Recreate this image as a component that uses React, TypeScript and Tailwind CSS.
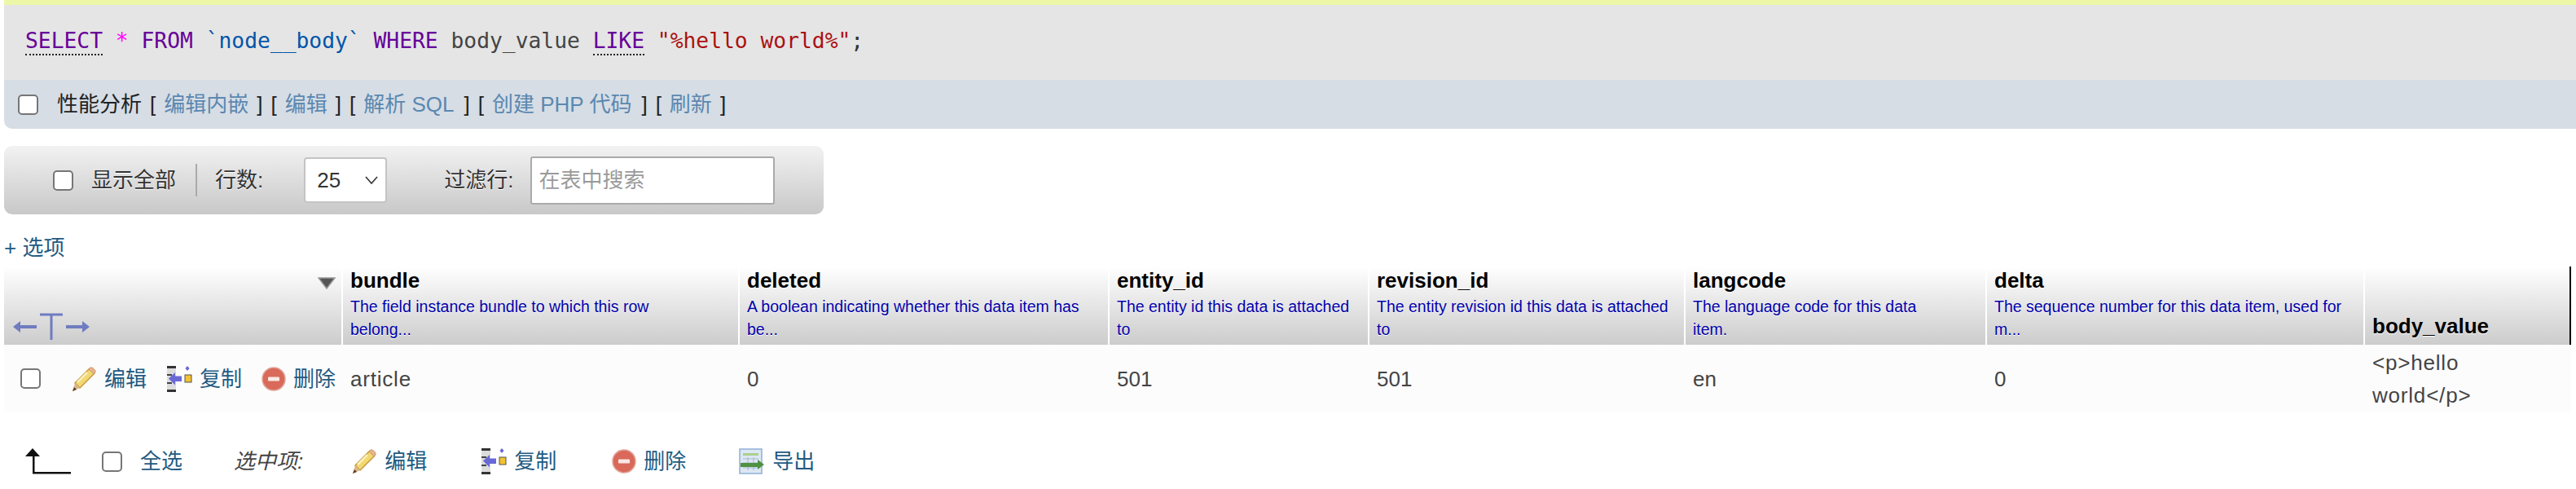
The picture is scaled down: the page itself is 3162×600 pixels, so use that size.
import React from "react";

const FONT = "font-['Liberation_Sans','Noto_Sans_CJK_SC',sans-serif]";
const LINK = "text-[#235a81]";

function Check() {
  return (
    <input
      type="checkbox"
      className="appearance-none block shrink-0 w-[25px] h-[25px] m-0 bg-white border-2 border-[#767676] rounded-[5px]"
    />
  );
}

function PencilIcon() {
  return (
    <svg width="32" height="32" viewBox="0 0 32 32" className="shrink-0">
      <path d="M23 3 L29 9 L11 27 L5 21 Z" fill="#f2d873" stroke="#c9983f" strokeWidth="1.5" />
      <path d="M22 4 L28 10 L30 8 C31 6 27 1 24 2 Z" fill="#e8b48c" stroke="#c99a6b" strokeWidth="1" />
      <path d="M5 21 L11 27 L2 31 Z" fill="#d9b98a" />
      <path d="M2 31 L4 26 L7 29 Z" fill="#5e3d1e" />
      <path d="M20 8 L8 20" stroke="#fbf0b8" strokeWidth="2.5" />
    </svg>
  );
}

function CopyIcon() {
  return (
    <svg width="32" height="32" viewBox="0 0 32 32" className="shrink-0">
      <rect x="1" y="0" width="11" height="32" fill="#dcdcdc" />
      <rect x="1" y="0" width="11" height="3" fill="#333" />
      <rect x="1" y="10" width="6" height="2" fill="#444" />
      <rect x="1" y="20" width="6" height="2" fill="#444" />
      <rect x="1" y="29" width="11" height="3" fill="#333" />
      <path d="M3 15.5 L11 8 V12.5 H19 V19 H11 V23.5 Z" fill="#6a68d6" />
      <rect x="23" y="11" width="8" height="9" fill="#f2c230" stroke="#555" strokeWidth="1" />
      <path d="M26 0 L28.5 3 L26 6 L23.5 3 Z" fill="#6a68d6" />
    </svg>
  );
}

function DeleteIcon() {
  return (
    <svg width="30" height="30" viewBox="0 0 30 30" className="shrink-0">
      <circle cx="15" cy="15" r="14" fill="#d9695a" stroke="#e0a498" strokeWidth="1.5" />
      <rect x="8" y="12.5" width="14" height="5" rx="1" fill="#f8e8e4" />
    </svg>
  );
}

function ExportIcon() {
  return (
    <svg width="32" height="32" viewBox="0 0 32 32" className="shrink-0">
      <rect x="1" y="1" width="27" height="30" fill="#dde7f3" stroke="#8fb0d8" strokeWidth="1.5" />
      <rect x="5" y="6" width="19" height="3" fill="#a9d08e" />
      <path d="M5 13 H24 M5 18 H24 M5 24 H24 M11 11 V27 M18 11 V27" stroke="#a8bcd2" strokeWidth="1.2" />
      <path d="M2 18 H23 V14 L31 20 L23 26 V23 H2 Z" fill="#4f9141" />
    </svg>
  );
}

function LinkedAction({ icon, label, className }: { icon: React.ReactNode; label: string; className: string }) {
  return (
    <span className={`flex items-center gap-[9px] ${className}`}>
      {icon}
      <span className={LINK}>{label}</span>
    </span>
  );
}

function HeaderCell({ name, lines }: { name: string; lines: string[] }) {
  return (
    <div className="h-full mr-[2px] pt-[2px] pl-[9px] bg-gradient-to-b from-white to-[#cccccc] [text-shadow:0_1px_0_#fff]">
      <div className="font-bold text-[26px] leading-[30px] text-black">{name}</div>
      <div className="mt-[3px] text-[19.5px] leading-[28px] text-[#0000aa] whitespace-nowrap">
        {lines.map((line) => (
          <div key={line}>{line}</div>
        ))}
      </div>
    </div>
  );
}

function BodyCell({ children }: { children: React.ReactNode }) {
  return <div className="pl-[9px] flex items-center text-[#444444]">{children}</div>;
}

function ProfileLink({ children }: { children: string }) {
  return <span className="text-[#5b88b0]">{children}</span>;
}

export default function App() {
  return (
    <div className={`w-[3162px] h-[600px] overflow-hidden bg-white text-[26px] ${FONT}`}>
      {/* query box */}
      <div className="ml-[5px] h-[6px] bg-[#ecf8a6]" />
      <div className="ml-[5px] h-[92px] bg-[#e5e5e5] flex items-center pl-[26px] pb-[2px] font-['DejaVu_Sans_Mono','Noto_Sans_CJK_SC',monospace] whitespace-pre text-[26.3px]">
        <span className="text-[#660099] border-b-2 border-dotted border-[#222] leading-[32px]">SELECT</span>
        <span className="text-[#ff00ff]"> * </span>
        <span className="text-[#660099]">FROM</span>
        <span className="text-[#0055aa]"> `node__body` </span>
        <span className="text-[#660099]">WHERE</span>
        <span className="text-[#444]"> body_value </span>
        <span className="text-[#660099] border-b-2 border-dotted border-[#222] leading-[32px]">LIKE</span>
        <span className="text-[#aa1111]"> "%hello world%"</span>
        <span className="text-[#333]">;</span>
      </div>
      <div className="ml-[5px] h-[60px] bg-[#d6dde5] rounded-bl-[10px] flex items-center gap-[10px] pl-[17px] whitespace-pre text-[#222]">
        <Check />
        <span className="ml-[13px]">性能分析</span>
        <span>[</span>
        <ProfileLink>编辑内嵌</ProfileLink>
        <span>]</span>
        <span>[</span>
        <ProfileLink>编辑</ProfileLink>
        <span>]</span>
        <span>[</span>
        <ProfileLink>解析 SQL</ProfileLink>
        <span className="ml-[2px]">]</span>
        <span>[</span>
        <ProfileLink>创建 PHP 代码</ProfileLink>
        <span className="ml-[2px]">]</span>
        <span>[</span>
        <ProfileLink>刷新</ProfileLink>
        <span>]</span>
      </div>

      {/* display options */}
      <div className="ml-[5px] mt-[21px] w-[1006px] h-[84px] rounded-[10px] bg-gradient-to-b from-[#f2f2f2] to-[#c8c8c8] flex items-center text-[#333] [text-shadow:0_1px_0_#fff]">
        <span className="ml-[60px]"><Check /></span>
        <span className="ml-[22px]">显示全部</span>
        <span className="ml-[24px] w-[2px] h-[40px] bg-[#aaaaaa]" />
        <span className="ml-[22px]">行数:</span>
        <div className="ml-[50px] w-[102px] h-[56px] bg-white border-2 border-[#c4c4c4] rounded-[4px] flex items-center justify-between pl-[14px] pr-[9px]">
          <span>25</span>
          <svg width="16" height="10" viewBox="0 0 16 10">
            <path d="M1 1 L8 9 L15 1" fill="none" stroke="#333" strokeWidth="1.6" />
          </svg>
        </div>
        <span className="ml-[70px]">过滤行:</span>
        <input
          placeholder="在表中搜索"
          className={`ml-[21px] w-[300px] h-[59px] bg-white border-2 border-[#aaaaaa] rounded-[3px] pl-[8px] text-[26px] outline-none [text-shadow:none] ${FONT}`}
        />
      </div>

      <div className={`ml-[5px] mt-[21px] h-[40px] leading-[40px] ${LINK}`}>+ 选项</div>

      {/* results table */}
      <div className="ml-[5px] mt-[3px] grid grid-cols-[416px_487px_454px_319px_388px_370px_464px_253px] w-[3152px]">
        <div className="h-[96px] mr-[2px] bg-gradient-to-b from-white to-[#cccccc] flex flex-col justify-between pr-[7px]">
          <svg width="22" height="15" viewBox="0 0 22 15" className="self-end mt-[13px]">
            <path d="M1 1 H21 L11 14 Z" fill="#555" stroke="#999" strokeWidth="1.5" />
          </svg>
          <svg width="96" height="34" viewBox="0 0 96 34" className="ml-[10px] mb-[5px]">
            <path d="M34 2 H62 M48 2 V33" stroke="#6f7cc0" strokeWidth="3" fill="none" />
            <path d="M1 17 L10 10 V15 H30 V19 H10 V24 Z" fill="#6f7cc0" />
            <path d="M95 17 L86 10 V15 H66 V19 H86 V24 Z" fill="#6f7cc0" />
          </svg>
        </div>
        <HeaderCell name="bundle" lines={["The field instance bundle to which this row", "belong..."]} />
        <HeaderCell name="deleted" lines={["A boolean indicating whether this data item has", "be..."]} />
        <HeaderCell name="entity_id" lines={["The entity id this data is attached", "to"]} />
        <HeaderCell name="revision_id" lines={["The entity revision id this data is attached", "to"]} />
        <HeaderCell name="langcode" lines={["The language code for this data", "item."]} />
        <HeaderCell name="delta" lines={["The sequence number for this data item, used for", "m..."]} />
        <div className="border-r-2 border-black bg-gradient-to-b from-white to-[#cccccc] flex items-end pl-[9px] pb-[3px] font-bold text-black [text-shadow:0_1px_0_#fff]">
          body_value
        </div>

        <div className="col-span-8 h-[83px] grid grid-cols-subgrid bg-[#fcfcfc] leading-[40px]">
          <div className="flex items-center">
            <span className="ml-[20px]"><Check /></span>
            <LinkedAction icon={<PencilIcon />} label="编辑" className="ml-[37px]" />
            <LinkedAction icon={<CopyIcon />} label="复制" className="ml-[24px]" />
            <LinkedAction icon={<DeleteIcon />} label="删除" className="ml-[24px]" />
          </div>
          <BodyCell><span className="tracking-[0.8px]">article</span></BodyCell>
          <BodyCell>0</BodyCell>
          <BodyCell>501</BodyCell>
          <BodyCell>501</BodyCell>
          <BodyCell>en</BodyCell>
          <BodyCell>0</BodyCell>
          <BodyCell>
            <span className="tracking-[0.8px]">&lt;p&gt;hello<br />world&lt;/p&gt;</span>
          </BodyCell>
        </div>
      </div>

      {/* bulk actions */}
      <div className="ml-[5px] mt-[42px] flex items-center h-[36px]">
        <svg width="58" height="32" viewBox="0 0 58 32" className="ml-[25px] shrink-0">
          <path d="M10 0 L19 10 H12.5 V29 H57 V31.5 H10 V10 H1 Z" fill="#111" />
        </svg>
        <span className="ml-[37px]"><Check /></span>
        <span className={`ml-[22px] ${LINK}`}>全选</span>
        <span className="ml-[63px] italic text-[#444]">选中项:</span>
        <LinkedAction icon={<PencilIcon />} label="编辑" className="ml-[59px]" />
        <LinkedAction icon={<CopyIcon />} label="复制" className="ml-[66px]" />
        <LinkedAction icon={<DeleteIcon />} label="删除" className="ml-[68px]" />
        <LinkedAction icon={<ExportIcon />} label="导出" className="ml-[65px]" />
      </div>
    </div>
  );
}
